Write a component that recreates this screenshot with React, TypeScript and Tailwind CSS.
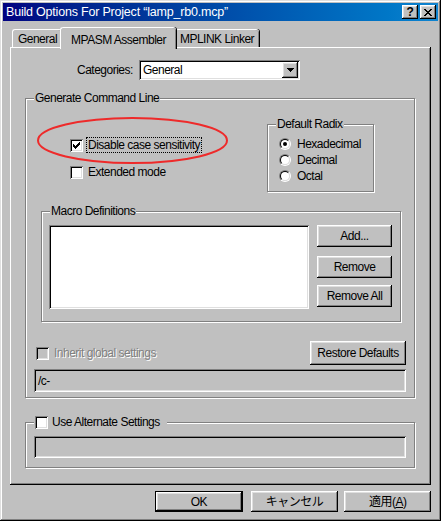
import React from "react";

const raised =
  "shadow-[inset_-1px_-1px_#000,inset_1px_1px_#fff,inset_-2px_-2px_#808080,inset_2px_2px_#dfdfdf]";
const sunken =
  "shadow-[inset_1px_1px_#808080,inset_-1px_-1px_#fff,inset_2px_2px_#000,inset_-2px_-2px_#dfdfdf]";
const etched = "border border-[#808080] shadow-[inset_1px_1px_#fff,1px_1px_#fff]";

function CheckBox({ checked = false, disabled = false }: { checked?: boolean; disabled?: boolean }) {
  return (
    <span
      className={`flex h-[13px] w-[13px] shrink-0 items-center justify-center ${sunken} ${
        disabled ? "bg-[#c0c0c0]" : "bg-white"
      }`}
    >
      {checked && (
        <svg width="7" height="7" viewBox="0 0 7 7" shapeRendering="crispEdges">
          <path d="M0 2h1v1h1v1h1v-1h1v-1h1v-1h1v-1h1v3h-1v1h-1v1h-1v1h-1v1h-1v-1h-1v-1h-1z" fill="#000" />
        </svg>
      )}
    </span>
  );
}

function Radio({ checked = false }: { checked?: boolean }) {
  return (
    <span className="flex h-[12px] w-[12px] shrink-0 rounded-full border border-t-[#808080] border-l-[#808080] border-r-white border-b-white">
      <span className="flex h-full w-full items-center justify-center rounded-full border border-t-black border-l-black border-r-[#dfdfdf] border-b-[#dfdfdf] bg-white">
        {checked && <span className="h-[4px] w-[4px] rounded-full bg-black" />}
      </span>
    </span>
  );
}

function Button({
  children,
  className = "",
}: {
  children: React.ReactNode;
  className?: string;
}) {
  return (
    <div className={`flex items-center justify-center bg-[#c0c0c0] ${raised} ${className}`}>
      {children}
    </div>
  );
}

function GroupBox({
  title,
  className = "",
  children,
}: {
  title: React.ReactNode;
  className?: string;
  children?: React.ReactNode;
}) {
  return (
    <div className={`relative shrink-0 ${etched} ${className}`}>
      <div className="absolute left-[8px] top-[-8px] flex h-[14px] items-center bg-[#c0c0c0] px-[1px] leading-none">
        {title}
      </div>
      {children}
    </div>
  );
}

export default function App() {
  return (
    <div className="relative flex h-[521px] w-[441px] flex-col bg-[#c0c0c0] p-[3px] font-['Liberation_Sans','Noto_Sans_CJK_JP',sans-serif] text-[12px] tracking-[-0.5px] text-black shadow-[inset_-1px_-1px_#000,inset_1px_1px_#dfdfdf,inset_-2px_-2px_#808080,inset_2px_2px_#fff]">
      {/* title bar */}
      <div className="flex h-[18px] shrink-0 items-center bg-gradient-to-r from-[#000080] to-[#1084d0] pl-[3px] pr-[2px]">
        <span className="flex-1 text-[12.5px] tracking-[-0.2px] text-white">
          Build Options For Project “lamp_rb0.mcp”
        </span>
        <Button className="h-[14px] w-[16px] text-[12px] font-bold leading-none">?</Button>
        <Button className="ml-[2px] h-[14px] w-[16px]">
          <svg width="8" height="7" viewBox="0 0 8 7" shapeRendering="crispEdges">
            <path d="M0 0h2v1h1v1h2v-1h1v-1h2v1h-1v1h-1v1h-1v1h1v1h1v1h1v1h-2v-1h-1v-1h-2v1h-1v1h-2v-1h1v-1h1v-1h1v-1h-1v-1h-1v-1h-1z" fill="#000" />
          </svg>
        </Button>
      </div>

      {/* body */}
      <div className="flex flex-1 flex-col px-[7px]">
        {/* tabs */}
        <div className="mt-[6px] flex h-[20px] items-end pl-[2px]">
          <div className="flex h-[18px] w-[50px] items-center justify-center rounded-t-[3px] border-l border-t border-white bg-[#c0c0c0] shadow-[inset_-1px_0_#808080]">
            General
          </div>
          <div className="relative z-10 mb-[-2px] ml-[-2px] flex h-[22px] w-[116px] items-start justify-center rounded-t-[3px] border-l border-t border-white bg-[#c0c0c0] pt-[3px] shadow-[inset_-1px_0_#808080,1px_0_#000]">
            MPASM Assembler
          </div>
          <div className="ml-[-1px] flex h-[18px] w-[84px] items-center justify-center rounded-t-[3px] border-t border-white bg-[#c0c0c0] shadow-[inset_-1px_0_#808080,1px_0_#000]">
            MPLINK Linker
          </div>
        </div>

        {/* tab panel */}
        <div className="flex h-[438px] w-[421px] flex-col bg-[#c0c0c0] shadow-[inset_-1px_-1px_#000,inset_1px_1px_#fff,inset_-2px_-2px_#808080]">
          {/* categories */}
          <div className="mt-[13px] flex h-[20px] items-center pl-[67px]">
            <span className="w-[62px]">Categories:</span>
            <div className={`flex h-[20px] w-[161px] items-center bg-white pl-[4px] pr-[2px] ${sunken}`}>
              <span className="flex-1">General</span>
              <Button className="h-[16px] w-[16px]">
                <svg width="7" height="4" viewBox="0 0 7 4" shapeRendering="crispEdges">
                  <path d="M0 0h7v1h-1v1h-1v1h-1v1h-1v-1h-1v-1h-1v-1h-1z" fill="#000" />
                </svg>
              </Button>
            </div>
          </div>

          {/* Generate Command Line */}
          <GroupBox title="Generate Command Line" className="ml-[15px] mt-[18px] h-[300px] w-[390px]">
            <div className="flex">
              <div className="flex w-[241px] flex-col pl-[44px] pt-[38px]">
                <div className="flex h-[16px] items-center">
                  <CheckBox checked />
                  <span className="ml-[3px] border border-dotted border-black px-[1px] leading-[14px]">
                    Disable case sensitivity
                  </span>
                </div>
                <div className="mt-[11px] flex h-[16px] items-center">
                  <CheckBox />
                  <span className="ml-[5px]">Extended mode</span>
                </div>
              </div>
              <GroupBox title="Default Radix" className="mt-[25px] h-[68px] w-[107px]">
                <div className="flex flex-col pl-[11px] pt-[11px]">
                  {[
                    ["Hexadecimal", true],
                    ["Decimal", false],
                    ["Octal", false],
                  ].map(([label, on]) => (
                    <div key={label as string} className="flex h-[16px] items-center">
                      <Radio checked={on as boolean} />
                      <span className="ml-[6px]">{label as string}</span>
                    </div>
                  ))}
                </div>
              </GroupBox>
            </div>

            <GroupBox title="Macro Definitions" className="ml-[15px] mt-[19px] h-[111px] w-[360px]">
              <div className="flex pl-[7px] pt-[13px]">
                <div className={`h-[84px] w-[260px] bg-white ${sunken}`} />
                <div className="ml-[8px] flex flex-col">
                  <Button className="h-[22px] w-[75px]">Add...</Button>
                  <Button className="mt-[9px] h-[22px] w-[75px]">Remove</Button>
                  <Button className="mt-[7px] h-[22px] w-[75px]">Remove All</Button>
                </div>
              </div>
            </GroupBox>

            <div className="mt-[19px] flex h-[24px] items-center pl-[10px] pr-[8px]">
              <CheckBox disabled />
              <span className="ml-[5px] flex-1 text-[#808080] [text-shadow:1px_1px_#fff]">
                Inherit global settings
              </span>
              <Button className="h-[24px] w-[96px]">Restore Defaults</Button>
            </div>
            <div className={`ml-[8px] mt-[4px] flex h-[23px] w-[372px] items-center bg-[#c0c0c0] pl-[4px] ${sunken}`}>
              /c-
            </div>
          </GroupBox>

          {/* Use Alternate Settings */}
          <GroupBox
            title={
              <span className="flex items-center pr-[6px]">
                <CheckBox />
                <span className="ml-[4px]">Use Alternate Settings</span>
              </span>
            }
            className="ml-[15px] mt-[24px] h-[46px] w-[390px]"
          >
            <div className={`ml-[8px] mt-[13px] h-[22px] w-[372px] bg-[#c0c0c0] ${sunken}`} />
          </GroupBox>
        </div>

        {/* dialog buttons */}
        <div className="mt-[6px] flex pl-[145px]">
          <div className="h-[21px] w-[88px] border border-black">
            <Button className="h-full w-full">OK</Button>
          </div>
          <Button className="ml-[8px] h-[21px] w-[88px]">キャンセル</Button>
          <Button className="ml-[6px] h-[21px] w-[87px]">
            適用(<span className="underline">A</span>)
          </Button>
        </div>
      </div>

      {/* red annotation ellipse */}
      <svg className="pointer-events-none absolute left-[36px] top-[116px]" width="193" height="49" viewBox="0 0 193 49">
        <ellipse cx="96.5" cy="24.5" rx="94.5" ry="22.5" fill="none" stroke="#ee2a2a" strokeWidth="2" />
      </svg>
    </div>
  );
}
